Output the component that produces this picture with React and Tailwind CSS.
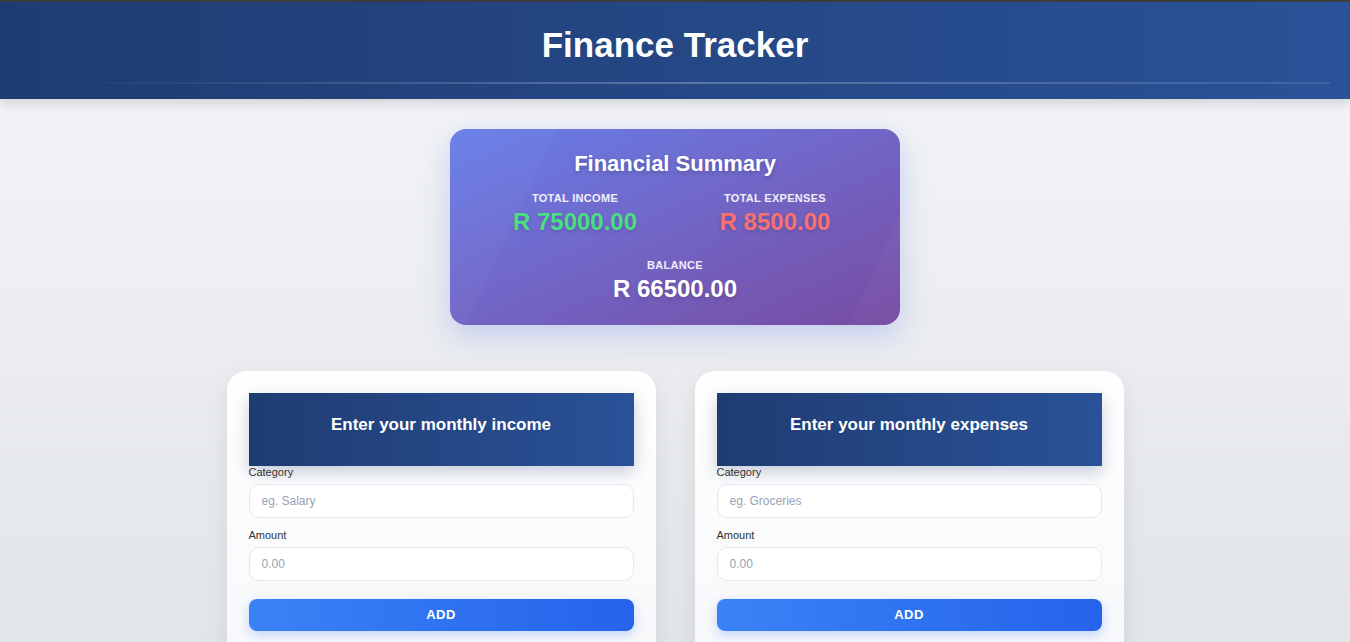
import { useState } from "react";

export default function App() {
  const [income, setIncome] = useState({ category: "", amount: "" });
  const [expense, setExpense] = useState({ category: "", amount: "" });

  const totalIncome = 75000;
  const totalExpenses = 8500;
  const balance = totalIncome - totalExpenses;

  return (
    <div className="min-h-[642px] bg-gradient-to-b from-[#f5f6f8] to-[#e1e4e8] font-['Liberation_Sans',Arial,sans-serif] overflow-hidden">

      {/* HEADER */}
      <header className="relative h-[99px] bg-gradient-to-r from-[#1f3c72] to-[#2a5298] border-t-2 border-[#3c3c3c] shadow-[0_4px_12px_rgba(0,0,0,0.15)] flex justify-center">
        <h1 className="mt-[23px] text-[35px] leading-[40px] font-bold text-white">Finance Tracker</h1>
        <div className="absolute left-[50px] right-[20px] top-[80px] h-[2px] bg-gradient-to-r from-transparent via-white/25 to-white/10" />
      </header>

      {/* SUMMARY */}
      <div className="flex justify-center mt-[30px]">
        <div className="relative w-[450px] h-[196px] rounded-[16px] bg-gradient-to-br from-[#667eea] to-[#764ba2] shadow-[0_10px_30px_rgba(102,126,234,0.3)] overflow-hidden text-white">
          <div className="absolute -left-[70px] -top-[40px] w-[120px] h-[300px] bg-white/[0.03] rotate-[25deg]" />
          <div className="absolute -right-[70px] bottom-[-160px] w-[120px] h-[300px] bg-white/[0.03] rotate-[25deg]" />
          <h2 className="relative text-center text-[22px] leading-[26px] font-bold mt-[22px] [text-shadow:0_2px_4px_rgba(0,0,0,0.2)]">Financial Summary</h2>
          <div className="relative grid grid-cols-2 mt-[14px] px-[25px]">
            <SummaryItem label="Total Income" value={totalIncome} color="text-[#4ade80]" />
            <SummaryItem label="Total Expenses" value={totalExpenses} color="text-[#f87171]" />
          </div>
          <div className="relative mt-[22px]">
            <SummaryItem label="Balance" value={balance} color="text-white" />
          </div>
        </div>
      </div>

      {/* FORMS */}
      <div className="flex justify-center gap-[39px] mt-[46px]">
        <EntryCard
          title="Enter your monthly income"
          placeholder="eg. Salary"
          form={income}
          setForm={setIncome}
        />
        <EntryCard
          title="Enter your monthly expenses"
          placeholder="eg. Groceries"
          form={expense}
          setForm={setExpense}
        />
      </div>
    </div>
  );
}

function SummaryItem({ label, value, color }) {
  return (
    <div className="text-center">
      <p className="text-[11px] leading-[14px] font-bold uppercase text-white/90 tracking-[0.3px]">{label}</p>
      <p className={`text-[24px] leading-[28px] font-bold mt-[3px] [text-shadow:0_2px_4px_rgba(0,0,0,0.15)] ${color}`}>
        R {value.toFixed(2)}
      </p>
    </div>
  );
}

function EntryCard({ title, placeholder, form, setForm }) {
  return (
    <div className="w-[429px] h-[300px] rounded-[20px] bg-gradient-to-b from-white to-[#f7f8fa] shadow-[0_8px_25px_rgba(0,0,0,0.08)] px-[22px] pt-[22px]">
      <div className="h-[73px] pt-[22px] bg-gradient-to-r from-[#1f3c72] to-[#2a5298] shadow-[0_6px_16px_rgba(30,58,110,0.25)] text-center">
        <h3 className="text-[17px] leading-[20px] font-bold text-white">{title}</h3>
      </div>

      <label className="block text-[11px] leading-[13px] text-[#333]">Category</label>
      <input
        type="text"
        value={form.category}
        onChange={(e) => setForm({ ...form, category: e.target.value })}
        placeholder={placeholder}
        className="block w-full h-[34px] mt-[5px] px-[12px] rounded-[10px] border border-[#e2e8f0] bg-white text-[12px] text-[#333] placeholder:text-[#94a3b8] outline-none"
      />

      <label className="block text-[11px] leading-[13px] text-[#333] mt-[11px]">Amount</label>
      <input
        type="number"
        value={form.amount}
        onChange={(e) => setForm({ ...form, amount: e.target.value })}
        placeholder="0.00"
        className="block w-full h-[34px] mt-[5px] px-[12px] rounded-[10px] border border-[#e2e8f0] bg-white text-[12px] text-[#333] placeholder:text-[#94a3b8] outline-none"
      />

      <button className="block w-full h-[32px] mt-[18px] rounded-[8px] bg-gradient-to-r from-[#3b82f6] to-[#2563eb] text-white text-[13px] font-bold tracking-[0.5px] shadow-[0_4px_12px_rgba(59,130,246,0.3)]">
        ADD
      </button>
    </div>
  );
}
